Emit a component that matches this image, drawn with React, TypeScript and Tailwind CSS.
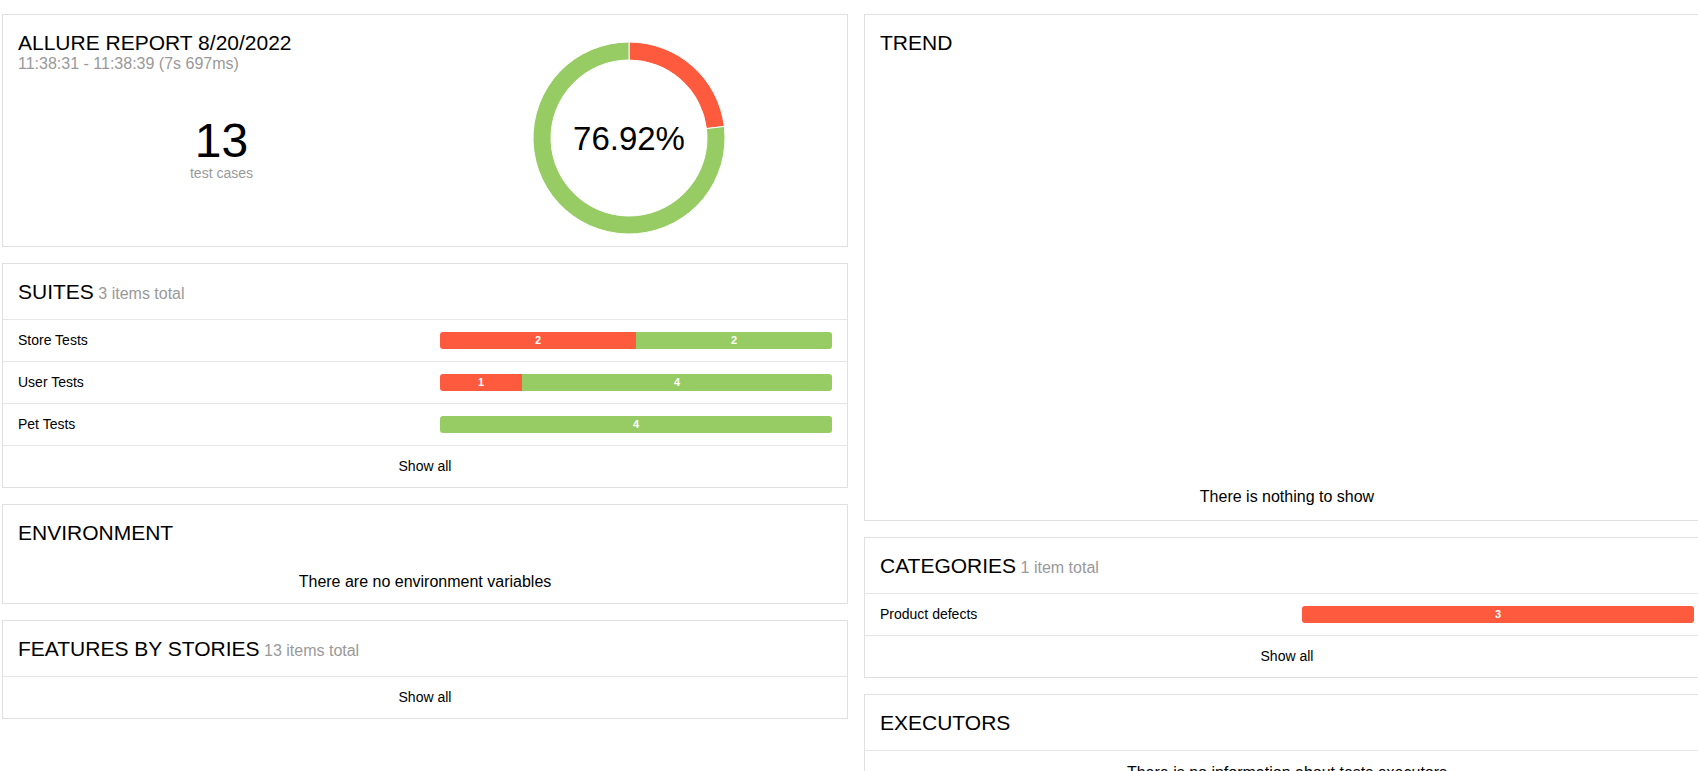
import type { ReactNode } from 'react';

type Bar = { failed: number; passed: number; failedPct: number };

const suites: { name: string; bar: Bar }[] = [
  { name: 'Store Tests', bar: { failed: 2, passed: 2, failedPct: 50 } },
  { name: 'User Tests', bar: { failed: 1, passed: 4, failedPct: 21 } },
  { name: 'Pet Tests', bar: { failed: 0, passed: 4, failedPct: 0 } },
];

function Card({ className = '', children }: { className?: string; children: ReactNode }) {
  return <div className={`w-[846px] shrink-0 border border-[#e0e0e0] bg-white ${className}`}>{children}</div>;
}

function Title({ label, count }: { label: string; count?: string }) {
  return (
    <h2 className="h-[25px] text-[21px] leading-[25px] text-black">
      {label}
      {count && <span className="text-[16px] leading-[18px] text-[#999]"> {count}</span>}
    </h2>
  );
}

function WidgetHeader({ label, count, divider = true }: { label: string; count?: string; divider?: boolean }) {
  return (
    <div className={`px-[15px] py-[15px] ${divider ? 'border-b border-[#e6e6e6]' : ''}`}>
      <Title label={label} count={count} />
    </div>
  );
}

function StatusBar({ bar }: { bar: Bar }) {
  return (
    <div className="flex h-[17px] w-[392px] shrink-0 overflow-hidden rounded-[3px] text-[11px] font-bold leading-[17px] text-white">
      {bar.failed > 0 && (
        <div className="bg-[#fd5a3e] text-center" style={{ width: `${bar.failedPct}%` }}>
          {bar.failed}
        </div>
      )}
      {bar.passed > 0 && <div className="flex-1 bg-[#97cc64] text-center">{bar.passed}</div>}
    </div>
  );
}

function Row({ name, children }: { name: string; children: ReactNode }) {
  return (
    <div className="flex h-[42px] items-center border-b border-[#e6e6e6] px-[15px] text-[14px] text-black">
      <div className="flex-1">{name}</div>
      {children}
    </div>
  );
}

function ShowAll() {
  return <div className="flex h-[41px] items-center justify-center text-[14px] text-black">Show all</div>;
}

function Donut() {
  // 3 of 13 failed, arc starts at 12 o'clock and runs clockwise
  return (
    <svg width="194" height="194" viewBox="0 0 194 194">
      <path
        d="M97 1 A96 96 0 0 1 192.3 85.43 L174.43 87.6 A78 78 0 0 0 97 19 Z"
        fill="#fd5a3e"
        stroke="#fff"
        strokeWidth="1"
      />
      <path
        d="M192.3 85.43 A96 96 0 1 1 97 1 L97 19 A78 78 0 1 0 174.43 87.6 Z"
        fill="#97cc64"
        stroke="#fff"
        strokeWidth="1"
      />
      <text
        x="97"
        y="109"
        textAnchor="middle"
        fontSize="33"
        fill="#000"
        fontFamily="'Liberation Sans', Arial, sans-serif"
      >
        76.92%
      </text>
    </svg>
  );
}

export default function App() {
  return (
    <div className="h-[771px] w-full overflow-hidden bg-white font-['Liberation_Sans',Arial,sans-serif]">
      <div className="flex gap-[16px] pl-[2px] pt-[14px]">
        <div className="flex shrink-0 flex-col gap-[16px]">
          <Card className="h-[233px]">
            <div className="flex px-[15px]">
              <div className="flex-1 pt-[15px]">
                <Title label="ALLURE REPORT 8/20/2022" />
                <div className="text-[16px] leading-[18px] text-[#999]">11:38:31 - 11:38:39 (7s 697ms)</div>
                <div className="mt-[44px] text-center">
                  <div className="text-[48px] leading-[48px] text-black">13</div>
                  <div className="text-[14px] leading-[16px] text-[#999]">test cases</div>
                </div>
              </div>
              <div className="flex flex-1 justify-center pt-[26px]">
                <Donut />
              </div>
            </div>
          </Card>

          <Card>
            <WidgetHeader label="SUITES" count="3 items total" />
            {suites.map(s => (
              <Row key={s.name} name={s.name}>
                <StatusBar bar={s.bar} />
              </Row>
            ))}
            <ShowAll />
          </Card>

          <Card>
            <WidgetHeader label="ENVIRONMENT" divider={false} />
            <div className="pb-[12px] pt-[13px] text-center text-[16px] leading-[18px] text-black">
              There are no environment variables
            </div>
          </Card>

          <Card>
            <WidgetHeader label="FEATURES BY STORIES" count="13 items total" />
            <ShowAll />
          </Card>
        </div>

        <div className="flex shrink-0 flex-col gap-[16px]">
          <Card className="h-[507px]">
            <WidgetHeader label="TREND" divider={false} />
            <div className="flex h-[450px] flex-col justify-end pb-[14px] text-center text-[16px] leading-[18px] text-black">
              There is nothing to show
            </div>
          </Card>

          <Card>
            <WidgetHeader label="CATEGORIES" count="1 item total" />
            <Row name="Product defects">
              <StatusBar bar={{ failed: 3, passed: 0, failedPct: 100 }} />
            </Row>
            <ShowAll />
          </Card>

          <Card>
            <WidgetHeader label="EXECUTORS" />
            <div className="pb-[12px] pt-[13px] text-center text-[16px] leading-[18px] text-black">
              There is no information about tests executors
            </div>
          </Card>
        </div>
      </div>
    </div>
  );
}
